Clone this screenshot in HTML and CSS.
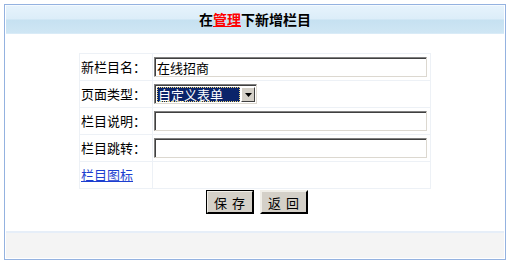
FILE: index.html
```html
<!DOCTYPE html>
<html lang="zh-CN">
<head>
    <meta charset="UTF-8">
    <title>新增栏目</title>
    <link rel="stylesheet" href="styles.css">
</head>
<body>
    <div class="panel">
        <div class="panel-title">在<a href="#" class="title-link">管理</a>下新增栏目</div>
        <div class="panel-body">
            <table class="form-table">
                <tr>
                    <td class="label">新栏目名：</td>
                    <td><input type="text" class="text-box" value="在线招商"></td>
                </tr>
                <tr>
                    <td class="label">页面类型：</td>
                    <td>
                        <div class="select-box">
                            <span class="select-value">自定义表单</span>
                            <span class="select-arrow">
                                <svg width="7" height="4" viewBox="0 0 7 4"><path d="M0 0h7L3.5 4z" fill="#000"/></svg>
                            </span>
                        </div>
                    </td>
                </tr>
                <tr>
                    <td class="label">栏目说明：</td>
                    <td><input type="text" class="text-box"></td>
                </tr>
                <tr>
                    <td class="label">栏目跳转：</td>
                    <td><input type="text" class="text-box"></td>
                </tr>
                <tr>
                    <td class="label"><a href="#" class="icon-link">栏目图标</a></td>
                    <td></td>
                </tr>
            </table>
            <div class="actions">
                <button class="btn btn-default">保 存</button>
                <button class="btn">返 回</button>
            </div>
        </div>
        <div class="panel-footer"></div>
    </div>
</body>
</html>
```

FILE: styles.css
```css
body {
    margin: 0;
    padding: 4px;
    background-color: #fff;
    font-family: "Noto Sans CJK SC", "Liberation Sans", sans-serif;
    font-size: 13px;
    color: #000;
}

.panel {
    width: 498px;
    height: 254px;
    border: 1px solid #94b2e0;
    padding: 0 1px;
    display: flex;
    flex-direction: column;
}

.panel-title {
    height: 27px;
    line-height: 26px;
    text-align: center;
    font-size: 14px;
    font-weight: bold;
    border-top: 1px solid #f4faff;
    background: linear-gradient(#e6f3fc 0, #dcedf9 48%, #c6e1f1 52%, #cfe6f4 100%);
    border-bottom: 1px solid #d9ebf7;
}

.title-link {
    color: #f00;
    text-decoration: underline;
    text-underline-offset: 1px;
}

.panel-body {
    flex: 1;
    padding-top: 19px;
}

.form-table {
    width: 352px;
    margin: 0 auto;
    border-collapse: collapse;
}

.form-table td {
    height: 26px;
    padding: 0 1px;
    border: 1px solid #edf1f6;
    line-height: 18px;
}

.form-table td.label {
    width: 70px;
    white-space: nowrap;
}

.text-box {
    box-sizing: border-box;
    width: 273px;
    height: 20px;
    margin: 0;
    padding: 0 2px;
    border: 1px solid;
    border-color: #808080 #dcd8d0 #dcd8d0 #808080;
    box-shadow: inset 1px 1px 0 #404040;
    font-family: inherit;
    font-size: 13px;
    outline: none;
}

.select-box {
    box-sizing: border-box;
    display: inline-flex;
    align-items: stretch;
    width: 103px;
    height: 20px;
    padding: 2px 1px 1px 2px;
    border: 1px solid;
    border-color: #808080 #dcd8d0 #dcd8d0 #808080;
    box-shadow: inset 1px 1px 0 #404040;
    background-color: #fff;
    vertical-align: middle;
}

.select-value {
    flex: 1;
    margin-right: 1px;
    padding-left: 1px;
    background-color: #0a246a;
    color: #fff;
    font-size: 13px;
    line-height: 15px;
    white-space: nowrap;
    outline: 1px dotted #e8d27a;
    outline-offset: -1px;
}

.select-arrow {
    width: 14px;
    box-sizing: border-box;
    display: flex;
    align-items: center;
    justify-content: center;
    background-color: #d4d0c8;
    border: 1px solid;
    border-color: #fff #404040 #404040 #fff;
}

.icon-link {
    color: #1d3fd0;
    text-decoration: underline;
}

.actions {
    display: flex;
    justify-content: center;
    gap: 6px;
    padding-top: 1px;
    padding-left: 4px;
}

.btn {
    box-sizing: border-box;
    width: 48px;
    height: 24px;
    padding: 0;
    background-color: #d4d0c8;
    border: 2px outset #f0eee8;
    border-right-color: #404040;
    border-bottom-color: #404040;
    font-family: inherit;
    font-size: 13px;
    color: #000;
    letter-spacing: 1px;
}

.btn-default {
    outline: 1px solid #000;
    outline-offset: -1px;
}

.panel-footer {
    height: 25px;
    margin-bottom: 1px;
    background-color: #f4f4f4;
    border-top: 2px solid #e6eef8;
}
```
